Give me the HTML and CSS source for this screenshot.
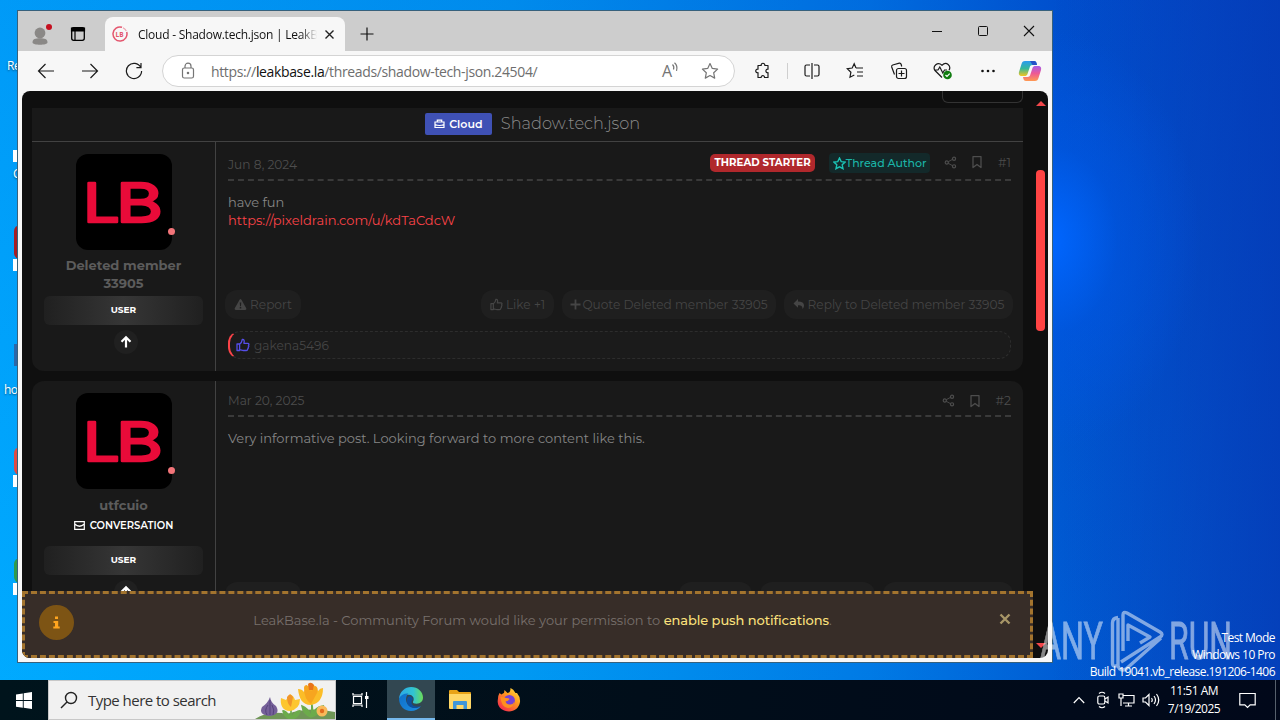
FILE: index.html
```html
<!DOCTYPE html>
<html lang="en">
<head>
    <meta charset="UTF-8">
    <meta name="viewport" content="width=device-width, initial-scale=1.0">
    <title>Desktop</title>
    <link rel="stylesheet" href="styles.css">
</head>
<body>
    <!-- shared icons -->
    <svg class="defs" width="0" height="0">
        <symbol id="thumb" viewBox="0 0 14 14"><path d="M1 6h2.6v6.5H1zM3.600 6.300C5.500 5 6 3.500 6.300 1.400c1.700-.4 2.400 1.200 1.600 3.900h3.900c1.300 0 1.500 1.500.6 2 .7.600.5 1.500-.2 1.800.4.700.1 1.500-.6 1.700.2 1-.4 1.700-1.400 1.700H7.500c-1.500 0-2.400-.8-3.900-.8" fill="none" stroke="currentColor" stroke-width="1.300" stroke-linejoin="round"/></symbol>
        <symbol id="share" viewBox="0 0 14 14"><path d="M4.500 6.200l4.800-2.700M4.500 7.800l4.800 2.700" stroke="currentColor" fill="none"/><g fill="none" stroke="currentColor" stroke-width="1.300"><circle cx="3" cy="7" r="1.700"/><circle cx="10.800" cy="2.900" r="1.700"/><circle cx="10.800" cy="11.100" r="1.700"/></g></symbol>
        <symbol id="bookmark" viewBox="0 0 14 14"><path d="M3 1.600h8v11L7 9.400l-4 3.200z" fill="none" stroke="currentColor" stroke-width="1.300" stroke-linejoin="round"/></symbol>
        <symbol id="warn" viewBox="0 0 14 14"><path d="M7 1.200q.6 0 1 .7l5.200 9.200q.6 1.400-.9 1.700H1.700Q.2 12.500.8 11.100L6 1.900q.4-.7 1-.7zM6.200 4.800l.3 4h1l.3-4zM6.200 9.800v1.400h1.600V9.800z" fill="currentColor" fill-rule="evenodd"/></symbol>
        <symbol id="up" viewBox="0 0 14 14"><path d="M7 12.500V2.500M2.500 6.800L7 2.300l4.500 4.500" fill="none" stroke="currentColor" stroke-width="2.200"/></symbol>
        <symbol id="lb" viewBox="0 0 96 96"><rect width="96" height="96" rx="12" fill="#000"/><g class="lb-text"><text x="7" y="67.500" textLength="37" lengthAdjust="spacingAndGlyphs">L</text><text x="40" y="67.500" textLength="47" lengthAdjust="spacingAndGlyphs">B</text></g></symbol>
    </svg>

    <div class="desktop">
        <div class="shortcuts">
            <span class="shortcut s1">Re</span>
            <span class="shortcut s2">C</span>
            <span class="shortcut s3">ho</span>
            <i class="app p1"></i><i class="app p2"></i><i class="app p3"></i><i class="app p4"></i>
            <i class="arrow a1"></i><i class="arrow a2"></i><i class="arrow a3"></i><i class="arrow a4"></i>
        </div>

        <div class="window">
            <div class="tabstrip">
                <div class="tabstrip-left">
                    <svg width="24" height="24" viewBox="0 0 24 24"><circle cx="11" cy="11" r="5.400" fill="#8a8886"/><path d="M3.500 20.500c0-3.500 3-4.200 7.500-4.200s7.500.7 7.500 4.200c0 3-15 3-15 0z" fill="#8a8886"/><circle cx="20" cy="5" r="3" fill="#c50f1f"/></svg>
                    <svg width="16" height="16" viewBox="0 0 16 16"><rect x="1.700" y="1.700" width="12.600" height="12.600" rx="2" fill="none" stroke="#000" stroke-width="1.300"/><path d="M1.500 2h13v3h-13zM5 5v9" stroke="#000" stroke-width="1.200"/></svg>
                </div>
                <div class="tab">
                    <svg width="16" height="16" viewBox="0 0 16 16"><path d="M10 1.300A7 7 0 1 0 14.700 6" fill="none" stroke="#e4566e" stroke-width="1.500"/><path d="M11 1.800A7 7 0 0 1 14.300 5" fill="none" stroke="#f0a0ae" stroke-width="1.200"/><text x="3.600" y="10.800" class="favicon-text">LB</text></svg>
                    <span class="tab-title">Cloud - Shadow.tech.json | LeakBa</span>
                    <svg width="11" height="11" viewBox="0 0 11 11"><path d="M1.500 1.500l8 8M9.500 1.500l-8 8" stroke="#222" stroke-width="1.400"/></svg>
                </div>
                <svg class="new-tab" width="14" height="14" viewBox="0 0 14 14"><path d="M7 .500v13M.500 7h13" stroke="#111" stroke-width="1.200"/></svg>
                <div class="window-buttons">
                    <svg width="12" height="12" viewBox="0 0 12 12"><path d="M1 6.500h10" stroke="#111"/></svg>
                    <svg width="12" height="12" viewBox="0 0 12 12"><rect x="1.500" y="1.500" width="9" height="9" rx="1" fill="none" stroke="#111"/></svg>
                    <svg width="12" height="12" viewBox="0 0 12 12"><path d="M1 1l10 10M11 1L1 11" stroke="#111" stroke-width="1.100"/></svg>
                </div>
            </div>

            <div class="toolbar">
                <div class="nav">
                    <svg width="18" height="18" viewBox="0 0 18 18"><path d="M17 9H1.500M8.500 2L1.500 9l7 7"/></svg>
                    <svg width="18" height="18" viewBox="0 0 18 18"><path d="M1 9h15.500M9.500 2l7 7-7 7"/></svg>
                    <svg width="18" height="18" viewBox="0 0 18 18"><path d="M15.800 5.500A7.600 7.600 0 1 0 16.600 9M16 1v4.600h-4.600"/></svg>
                </div>
                <div class="address">
                    <svg width="16" height="18" viewBox="0 0 16 18" class="grey"><rect x="2.500" y="6" width="11" height="10" rx="1.800"/><path d="M5 6V4.200a3 3 0 0 1 6 0V6"/><circle cx="8" cy="11" r=".700"/></svg>
                    <span class="url">https://<b>leakbase.la</b>/threads/shadow-tech-json.24504/</span>
                    <span class="read-aloud"><span class="read-letter">A</span><svg width="7" height="12" viewBox="0 0 7 12" class="grey"><path d="M.500 2.500q2 2 1 5M2.500.800q3.500 3 2 8"/></svg></span>
                    <svg width="18" height="18" viewBox="0 0 18 18" class="grey"><path d="M9 1.500l2.300 4.900 5.300.7-3.900 3.700 1 5.300L9 13.500l-4.700 2.600 1-5.300L1.400 7.100l5.300-.7z" stroke-linejoin="round"/></svg>
                </div>
                <div class="tools">
                    <svg width="18" height="18" viewBox="0 0 18 18"><path d="M4 3.500h3.200c-.5-3 4-3 3.600 0H14v3.700c-2.800-.4-2.800 3.900 0 3.500v4.800h-3.500c.3-2.400-3.600-2.400-3.300 0H4v-4.800c-3 .5-3-4 0-3.500z" stroke-linejoin="round"/></svg>
                    <span class="divider"></span>
                    <svg width="18" height="18" viewBox="0 0 18 18"><path d="M7 3H3.500Q2 3 2 4.500v8Q2 14 3.500 14H7M9 1v16M11 3h3.500Q16 3 16 4.500v8q0 1.500-1.500 1.500H11"/></svg>
                    <svg width="18" height="18" viewBox="0 0 18 18"><path d="M10 6L8.200 1.800 6.200 6l-4.900.7 3.600 3.500-.9 5L8.300 13M10 6h7M11 10h6M11 14h6"/></svg>
                    <svg width="18" height="18" viewBox="0 0 18 18"><rect x="6.500" y="6.500" width="10" height="10" rx="2"/><path d="M11.500 8.500v6M8.500 11.500h6M4.500 12.500L1.700 5Q1.300 3.500 2.700 3l6.600-1.800q1.500-.2 1.900 1.300l.5 2"/></svg>
                    <svg width="20" height="18" viewBox="0 0 20 18"><path d="M9 15.500L2 8.500C-.8 4.500 4.500-1 9 3.200 13.500-1 18.500 4 16 8.200M1 8h4l1.800-3 3 6L11.500 8H14"/><circle cx="14.500" cy="13" r="4.300" fill="#107c10" stroke="none"/><path d="M12.500 13l1.500 1.500 2.700-2.800" stroke="#fff"/></svg>
                    <svg width="18" height="18" viewBox="0 0 18 18"><g fill="#111" stroke="none"><circle cx="3.500" cy="9" r="1.300"/><circle cx="9" cy="9" r="1.300"/><circle cx="14.500" cy="9" r="1.300"/></g></svg>
                    <svg class="copilot" width="24" height="22" viewBox="0 0 24 22">
                        <defs>
                            <linearGradient id="cp1" x1="0" y1="0" x2="0" y2="1"><stop offset="0" stop-color="#2a9bf0"/><stop offset=".5" stop-color="#35b89b"/><stop offset="1" stop-color="#f4c51f"/></linearGradient>
                            <linearGradient id="cp2" x1="0" y1="0" x2="0" y2="1"><stop offset="0" stop-color="#a65ce8"/><stop offset=".5" stop-color="#ee5a93"/><stop offset="1" stop-color="#ff9a52"/></linearGradient>
                        </defs>
                        <path d="M7 1h9c2 0 2.500 1.500 3 4h-4.500c-2 0-2.500 1-3 3L9.500 14c-.5 1.500-1.500 2-3 2H4c-3 0-3.500-2-3-4L3.500 4C4 2 5 1 7 1z" fill="url(#cp1)" stroke="none"/>
                        <path d="M12 1h4c2 0 2.500 1.500 3 4h-4.500z" fill="#2450c8" stroke="none"/>
                        <path d="M17 21H8c-2 0-2.500-1.500-3-4h4.500c2 0 2.500-1 3-3l2-6c.5-1.500 1.500-2 3-2H20c3 0 3.500 2 3 4l-2.500 8c-.5 2-1.500 3-3.500 3z" fill="url(#cp2)" stroke="none"/>
                    </svg>
                </div>
            </div>

            <div class="viewport">
                <div class="page">
                    <div class="top-button"></div>
                    <div class="thread-title">
                        <span class="prefix"><svg width="11" height="10" viewBox="0 0 11 10"><path d="M1 3h9v5.500H1zM3.300 3V1.200h4.400V3M1 5.500q4.500 2 9 0" fill="none" stroke="#fff" stroke-width="1.200"/></svg>Cloud</span>
                        <span class="title-text">Shadow.tech.json</span>
                    </div>

                    <div class="post post-first">
                        <div class="user">
                            <div class="avatar"><svg width="96" height="96"><use href="#lb"/></svg><i class="status"></i></div>
                            <div class="username">Deleted member<br>33905</div>
                            <div class="user-title">USER</div>
                            <div class="up"><svg width="14" height="14"><use href="#up"/></svg></div>
                        </div>
                        <div class="main">
                            <div class="post-head">
                                <span class="date">Jun 8, 2024</span>
                                <span class="starter">THREAD STARTER</span>
                                <span class="author"><svg width="13" height="13" viewBox="0 0 13 13"><path d="M6.500 1l1.700 3.600 3.900.5-2.900 2.700.8 3.900-3.500-1.900L3 11.700l.8-3.900L.9 5.100l3.900-.5z" fill="none" stroke="#1bc3b5" stroke-width="1.400"/></svg>Thread Author</span>
                                <svg class="share" width="13" height="13"><use href="#share"/></svg>
                                <svg class="bookmark" width="14" height="14"><use href="#bookmark"/></svg>
                                <span class="number">#1</span>
                            </div>
                            <div class="post-body">have fun<br><a>https://pixeldrain.com/u/kdTaCdcW</a></div>
                            <div class="actions">
                                <span class="action report"><svg width="13" height="13"><use href="#warn"/></svg>Report</span>
                                <span class="action like"><svg width="13" height="13"><use href="#thumb"/></svg>Like +1</span>
                                <span class="action quote"><svg width="11" height="11" viewBox="0 0 11 11"><path d="M5.500.500v10M.500 5.500h10" stroke="currentColor" stroke-width="1.800"/></svg>Quote Deleted member 33905</span>
                                <span class="action reply"><svg width="12" height="12" viewBox="0 0 12 12"><path d="M5 1v2.500c4 0 6 1.500 6 4 0 1.500-.6 2.500-1.600 3.500.4-2.500-.8-3.800-4.400-3.800v2.600L.500 5.400z" fill="currentColor"/></svg>Reply to Deleted member 33905</span>
                            </div>
                            <div class="reactions"><svg width="14" height="14"><use href="#thumb"/></svg>gakena5496</div>
                        </div>
                    </div>

                    <div class="post post-second">
                        <div class="user">
                            <div class="avatar"><svg width="96" height="96"><use href="#lb"/></svg><i class="status"></i></div>
                            <div class="username">utfcuio</div>
                            <div class="conversation"><svg width="11" height="9" viewBox="0 0 11 9"><path d="M.700.700h9.600v7.600H.700zM.700 3q4.800 4.500 9.600 0" fill="none" stroke="#fff" stroke-width="1.200"/></svg>CONVERSATION</div>
                            <div class="user-title">USER</div>
                            <div class="up"><svg width="14" height="14"><use href="#up"/></svg></div>
                        </div>
                        <div class="main">
                            <div class="post-head">
                                <span class="date">Mar 20, 2025</span>
                                <svg class="share" width="13" height="13"><use href="#share"/></svg>
                                <svg class="bookmark" width="14" height="14"><use href="#bookmark"/></svg>
                                <span class="number">#2</span>
                            </div>
                            <div class="post-body">Very informative post. Looking forward to more content like this.</div>
                            <div class="actions">
                                <span class="action report"><svg width="13" height="13"><use href="#warn"/></svg></span>
                                <span class="action like"><svg width="13" height="13"><use href="#thumb"/></svg></span>
                                <span class="action quote-short"></span>
                                <span class="action reply-short"></span>
                            </div>
                        </div>
                    </div>
                </div>

                <div class="scrollbar">
                    <i class="scroll-up"></i>
                    <i class="thumb"></i>
                    <i class="scroll-down"></i>
                </div>

                <div class="push-notice">
                    <span class="info"><svg width="9" height="13" viewBox="0 0 9 13"><path d="M3 .500h3v2.600H3zM1.500 5h4.700v5.500h1.500v2H1.300v-2H3V7H1.500z" fill="#ffa51f"/></svg></span>
                    <span class="notice-text">LeakBase.la - Community Forum would like your permission to <a>enable push notifications</a>.</span>
                    <svg class="close" width="12" height="12" viewBox="0 0 12 12"><path d="M1.500 1.500l9 9M10.500 1.500l-9 9" stroke="#a79567" stroke-width="2.400"/></svg>
                </div>
            </div>
        </div>

        <svg class="watermark" width="200" height="70" viewBox="0 0 200 70">
            <g class="watermark-text">
                <text x="1" y="53" textLength="63" lengthAdjust="spacingAndGlyphs">ANY</text>
                <text x="130" y="53" textLength="63" lengthAdjust="spacingAndGlyphs">RUN</text>
            </g>
            <g fill="none" stroke="#fff" stroke-width="3.400" stroke-linejoin="round">
                <path d="M79 11.500q-5.500.5-5.500 5.500v40q0 5 5.500 2V12"/>
                <path d="M84 45V9q0-4 4-2l33 19q4 2.500 0 5L82 56M79 60q2 6 8 3l35-31"/>
                <path d="M89 35V19l22 12-10 6"/>
            </g>
        </svg>

        <div class="build-info">Test Mode<br>Windows 10 Pro<br>Build 19041.vb_release.191206-1406</div>

        <div class="taskbar">
            <div class="start"><svg width="16" height="17" viewBox="0 0 16 17"><path d="M0 2.400l6.800-1v6.700H0zM7.700 1.300L16 0v8.100H7.700zM0 9h6.800v6.700L0 14.700zM7.700 9H16v8l-8.300-1.200z" fill="#fff"/></svg></div>
            <div class="search">
                <svg width="18" height="18" viewBox="0 0 18 18"><circle cx="11" cy="7" r="5.500" fill="none" stroke="#222" stroke-width="1.400"/><path d="M7 11l-6 6" stroke="#222" stroke-width="1.500"/></svg>
                <span>Type here to search</span>
                <svg class="flowers" width="80" height="38" viewBox="0 0 80 38">
                    <path d="M0 38q14-9 32-5 22-8 48-2v7z" fill="#6f9656"/>
                    <path d="M56 36q3-6 0-16M56 35q4-9 12-10-4 9-12 11M56 35q-3-8-9-10 1 8 9 11M36 37V26M36 37q6-8 9-7-2 7-9 8M36 37q-6-8-8-7 2 7 8 8" fill="#6cab4b" stroke="#6cab4b" stroke-width="1.600"/>
                    <path d="M56 24c-9 0-12-7-13-16q4 0 6 3 2-6 7-8 5 1 7 7 2-3 5-3 0 15-12 17z" fill="#fbbd28"/>
                    <path d="M49 7q0-3 3-3l4 6 4-5q4 1 2 7l-6 11q-7-5-7-16z" fill="#f7a51f"/><path d="M53 3q3-3 6 1l-1 5h-4z" fill="#e8731a"/>
                    <path d="M35 30c-8 0-10-7-9-13l5 2 4-6q4 2 5 6l5-1q0 10-10 12z" fill="#fdc62f"/><path d="M32 16q3-5 6 0l-2 10q-4-3-4-10z" fill="#f0952a"/>
                    <path d="M15 16q1 6 6 9 5 8-6 10-12-1-8-9 6-4 8-10z" fill="#756099"/><path d="M15 19v15M13 24q-4 5-1 10M17 24q3 5 1 10" stroke="#55437c" fill="none"/>
                    <circle cx="67" cy="30" r="5.500" fill="#f9b95a"/><circle cx="67" cy="30" r="2.200" fill="#e36b1d"/>
                </svg>
            </div>
            <div class="task"><svg width="18" height="16" viewBox="0 0 18 16"><path d="M1 1v2h9V1M1 15v-2h9v2M1.500 4.500h8v7h-8zM14.500 0v16" fill="none" stroke="#fff" stroke-width="1.200"/><path d="M13 4h3.500v3H13z" fill="#fff"/></svg></div>
            <div class="task active">
                <svg width="24" height="24" viewBox="0 0 24 24">
                    <defs>
                        <linearGradient id="eg" x1="0" x2="1"><stop offset="0" stop-color="#2ba8e8"/><stop offset=".6" stop-color="#31c3d2"/><stop offset="1" stop-color="#6bdc58"/></linearGradient>
                        <linearGradient id="eb" x1="0" x2="1" y2="1"><stop offset="0" stop-color="#0f6fc8"/><stop offset="1" stop-color="#1c8ce0"/></linearGradient>
                    </defs>
                    <path d="M0 11.500C.8 4.500 6 0 12.200 0 19 0 24 5 24 10.500c0 4-3 6.200-6.300 6.200-2.700 0-4.200-1-3.700-2 1.700-2.700.5-6.700-4-7C5 7.500 1.500 10 0 11.500z" fill="url(#eg)"/>
                    <path d="M0 11.500C2 7.500 6 6 9.500 6.500 7 8.500 6 13 8.500 17c3 4.500 9.500 4.500 13.500 2-2.500 3.500-6 5-10 5C5 24 0 18.500 0 11.500z" fill="url(#eb)"/>
                    <path d="M9 10c-2 3-1.500 6.500 1 9 3.500 3 8.500 2.500 12 0-5 1.500-9.500 0-9.500-4 0-1 .5-2 1.500-2.800C13.500 9.500 10.500 8.500 9 10z" fill="#0d4f9e"/>
                </svg>
            </div>
            <div class="task"><svg width="22" height="20" viewBox="0 0 22 20"><path d="M0 1q0-1 1-1h7l2 2h11q1 0 1 1v5H0z" fill="#e8a317"/><path d="M0 4h22v14q0 1-1 1H1q-1 0-1-1z" fill="#ffd766"/><path d="M4 19v-7q0-1 1-1h12q1 0 1 1v7h-3.500v-4h-7v4z" fill="#3f96d8"/></svg></div>
            <div class="task"><svg width="24" height="24" viewBox="0 0 24 24">
                <defs><linearGradient id="fx" x1="1" y1="0" x2=".2" y2="1"><stop offset="0" stop-color="#ffe843"/><stop offset=".45" stop-color="#ff9a1f"/><stop offset="1" stop-color="#f5264f"/></linearGradient></defs>
                <path d="M2.500 5l2 1.500Q6 5 7 5l.500-3 3 3q3 0 3-5 3 1 5 5l1.500 0q3.500 4 3 9c-1 6-5.500 9.500-11 9.500S1 20 .7 14Q.5 8 2.500 5z" fill="url(#fx)"/><circle cx="12.300" cy="12.500" r="5.600" fill="#7542d6"/><path d="M3.500 9q4 0 5.500 1 3 0 3.500 1-1 2-4 2.500 1 3.500 5 3 3-.5 4-3-1 6-6.500 6.500Q4 19 3.500 9z" fill="#ff8f1f"/>
            </svg></div>
            <div class="tray">
                <svg class="caret" width="12" height="8" viewBox="0 0 12 8"><path d="M.800 7L6 1.500 11.200 7"/></svg>
                <svg class="camera" width="12" height="18" viewBox="0 0 12 18"><rect x=".800" y="5" width="7" height="8" rx="1.500"/><path d="M8 8l3-2v6l-3-2M2 2.500Q5 0 8 2.500M2 15.500q3 2.500 6 0"/></svg>
                <svg width="17" height="14" viewBox="0 0 17 14"><path d="M5 2.500h11v7.500H5M10.500 10v3M7 13h7M1 1h4v4H1zM3 5v8"/></svg>
                <svg width="18" height="14" viewBox="0 0 18 14"><path d="M1 5v4h2.500L7 12.500v-11L3.500 5zM9.500 5q1.500 2 0 4M12 3q3 4 0 8M14.500 1q4.500 6 0 12"/></svg>
                <span class="clock">11:51 AM<br>7/19/2025</span>
                <svg class="action-center" width="17" height="17" viewBox="0 0 17 17"><path d="M.800 1.500h15.400v11.300h-5L8.500 15.500l-2.700-2.700h-5z"/></svg>
                <i class="show-desktop"></i>
            </div>
        </div>
    </div>
</body>
</html>
```
FILE: styles.css
```css
* {
    margin: 0;
    padding: 0;
    box-sizing: border-box;
}

body {
    width: 1280px;
    height: 720px;
    overflow: hidden;
    font-family: 'Open Sans', 'Noto Sans', sans-serif;
}

svg {
    display: block;
    flex-shrink: 0;
}

.defs {
    position: absolute;
}

.desktop {
    position: relative;
    width: 1280px;
    height: 720px;
    overflow: hidden;
    background:
        radial-gradient(ellipse 150px 210px at 1050px 240px, #0066ff 0%, rgba(0, 88, 232, 0.5) 45%, rgba(0, 80, 215, 0) 100%),
        linear-gradient(90deg, rgba(4, 56, 180, 0) 1052px, rgba(4, 56, 180, 0.75) 1280px),
        linear-gradient(180deg, rgba(0, 70, 200, 0.14) 0%, rgba(0, 190, 255, 0.12) 100%),
        linear-gradient(90deg, #00a8ff 0%, #0096f2 40%, #0072e2 68%, #0050ce 83%, #044cc8 100%);
}

/* desktop shortcuts, mostly hidden by the window */
.shortcut {
    position: absolute;
    color: #fff;
    font-size: 12px;
    letter-spacing: -0.5px;
    line-height: 16px;
    text-shadow: 0 1px 2px rgba(0, 0, 0, 0.5);
}

.s1 { left: 7px; top: 58px; }
.s2 { left: 13px; top: 166px; }
.s3 { left: 4px; top: 382px; }

.arrow, .app {
    position: absolute;
    width: 12px;
    height: 12px;
    left: 13px;
    background: #fff;
}

.a1 { top: 150px; }
.a2 { top: 259px; }
.a3 { top: 475px; }
.a4 { top: 583px; }

.app {
    left: 14px;
    height: 34px;
    border-radius: 10px;
}

.p1 { top: 225px; background: #a51d24; }
.p2 { top: 344px; height: 22px; border-radius: 0; background: #2c67a8; }
.p3 { top: 447px; height: 28px; background: #df4a43; }
.p4 { top: 558px; height: 25px; background: #2f9a4d; }

.window {
    position: absolute;
    left: 17px;
    top: 10px;
    width: 1036px;
    height: 653px;
    border: 1px solid #37617c;
    background: #f7f7f7;
    display: flex;
    flex-direction: column;
}

.tabstrip {
    height: 40px;
    background: #cdcdcd;
    display: flex;
    align-items: flex-end;
}

.tabstrip-left {
    width: 87px;
    height: 40px;
    padding: 5px 0 0 11px;
    display: flex;
    align-items: center;
    gap: 17px;
}

.tab {
    width: 240px;
    height: 34px;
    padding: 0 10px 0 7px;
    background: #f7f7f7;
    border-radius: 8px 8px 0 0;
    display: flex;
    align-items: center;
}

.favicon-text {
    font: bold 6.5px 'Open Sans', sans-serif;
    fill: #e4566e;
}

.tab-title {
    width: 179px;
    margin: 0 7px 0 10px;
    font-size: 12px;
    letter-spacing: -0.24px;
    color: #111;
    white-space: nowrap;
    overflow: hidden;
    mask-image: linear-gradient(90deg, #000 162px, transparent 179px);
}

.new-tab {
    margin: 0 0 10px 15px;
}

.window-buttons {
    margin-left: auto;
    height: 40px;
    padding-right: 17px;
    display: flex;
    align-items: center;
    gap: 34px;
}

.toolbar {
    height: 40px;
    display: flex;
    align-items: center;
}

.toolbar svg {
    fill: none;
    stroke: #1b1b1b;
    stroke-width: 1.2;
}

.toolbar svg.grey {
    stroke: #757575;
}

.nav {
    width: 144px;
    padding-left: 19px;
    display: flex;
    gap: 26px;
}

.address {
    width: 573px;
    height: 32px;
    padding: 0 15px 0 17px;
    background: #fff;
    border: 1px solid #d4d4d4;
    border-radius: 16px;
    display: flex;
    align-items: center;
}

.url {
    margin-left: 15px;
    flex: 1;
    font-size: 14px;
    letter-spacing: -0.36px;
    color: #6e6e6e;
    white-space: nowrap;
}

.url b {
    font-weight: 400;
    color: #111;
}

.read-aloud {
    display: flex;
    margin-right: 22px;
    color: #757575;
}

.read-letter {
    font-size: 16px;
    line-height: 18px;
}

.tools {
    flex: 1;
    padding: 0 10px 0 19px;
    display: flex;
    align-items: center;
    justify-content: space-between;
}

.copilot {
    margin-left: -4px;
}

.divider {
    width: 1px;
    height: 16px;
    margin: 0 -11px 0 -10px;
    background: #cfcfcf;
}

/* forum page */
.viewport {
    position: relative;
    width: 1026px;
    height: 567px;
    margin-left: 4px;
    display: flex;
    overflow: hidden;
    border-radius: 8px;
    background: #0f0f0f;
    font-family: Montserrat, Inter, sans-serif;
}

.page {
    width: 1011px;
    padding: 0 10px;
    display: flex;
    flex-direction: column;
}

.top-button {
    width: 81px;
    height: 12px;
    margin: 0 0 5px auto;
    border: 1px solid #333;
    border-top: none;
    border-radius: 0 0 6px 6px;
    flex-shrink: 0;
}

.thread-title {
    height: 34px;
    flex-shrink: 0;
    padding-left: 10px;
    background: #191919;
    border-bottom: 1px solid #424242;
    display: flex;
    align-items: center;
    justify-content: center;
    gap: 9px;
}

.prefix {
    width: 67px;
    height: 22px;
    margin-top: -1px;
    background: #3f51b5;
    border-radius: 2px;
    color: #fff;
    font-size: 11px;
    font-weight: 600;
    display: flex;
    align-items: center;
    justify-content: center;
    gap: 4px;
}

.title-text {
    margin-bottom: 4px;
    font-size: 16.2px;
    color: #8c8c8c;
    font-weight: 300;
}

.post {
    height: 290px;
    flex-shrink: 0;
    margin-bottom: 10px;
    background: #191919;
    border-radius: 12px;
    display: flex;
}

.post-first {
    height: 229px;
    border-radius: 0 0 12px 12px;
}

.user {
    width: 184px;
    padding: 12px 12px 0;
    border-right: 1px solid #424242;
    display: flex;
    flex-direction: column;
    align-items: center;
}

.avatar {
    position: relative;
}

.lb-text {
    font: 400 54px Inter, sans-serif;
    fill: #e90b39;
    stroke: #e90b39;
    stroke-width: 2.4;
    stroke-linejoin: round;
}

.status {
    position: absolute;
    right: -3px;
    bottom: 15px;
    width: 7px;
    height: 7px;
    border-radius: 50%;
    background: #f27479;
}

.username {
    margin: 6px 0 1px;
    font-size: 13px;
    line-height: 18px;
    font-weight: 700;
    color: #5c5c5c;
    text-align: center;
    white-space: nowrap;
}

.conversation {
    height: 18px;
    margin: 2px 0 9px;
    display: flex;
    align-items: center;
    gap: 5px;
    font-size: 10px;
    font-weight: 600;
    color: #fff;
}

.post-second .username {
    margin: 7px 0 0;
}

.user-title {
    width: 159px;
    height: 29px;
    margin-top: 3px;
    border-radius: 6px;
    background: linear-gradient(90deg, #202020, #363636 50%, #202020);
    color: #fff;
    font-size: 9px;
    font-weight: 700;
    line-height: 28px;
    text-align: center;
}

.up {
    width: 24px;
    height: 24px;
    margin: 5px 0 0 5px;
    border-radius: 50%;
    background: #202020;
    color: #fff;
    display: flex;
    align-items: center;
    justify-content: center;
}

.main {
    flex: 1;
    padding: 8px 12px 0;
}

.post-head {
    height: 31px;
    border-bottom: 2px dashed #3a3a3a;
    display: flex;
    align-items: center;
    color: #4d4d4d;
    font-size: 12.2px;
}

.date {
    margin-right: auto;
}

.starter {
    width: 105px;
    height: 18px;
    margin: 0 14px 3px 0;
    border-radius: 5px;
    background: #b0282c;
    color: #fff;
    font-size: 10.2px;
    font-weight: 700;
    line-height: 18px;
    text-align: center;
    white-space: nowrap;
}

.author {
    width: 101px;
    height: 20px;
    margin: 0 14px 3px 0;
    border-radius: 4px;
    background: #13292a;
    color: #1bb5a8;
    font-size: 11px;
    font-weight: 500;
    display: flex;
    align-items: center;
    justify-content: center;
    white-space: nowrap;
}

.share {
    margin-bottom: 5px;
}

.bookmark {
    margin: 0 14px 5px 13px;
}

.number {
    margin-bottom: 5px;
}

.post-body {
    height: 109px;
    padding-top: 12px;
    color: #868686;
    font-size: 13px;
    line-height: 18px;
}

.post-body a {
    color: #fb4348;
}

.post-second .main {
    padding-top: 5px;
}

.post-second .post-head svg,
.post-second .number {
    margin-bottom: 0;
}

.post-second .date {
    margin-bottom: 1px;
}

.post-second .post-body {
    height: 165px;
}

.actions {
    display: flex;
    gap: 8px;
    margin: 0 -2px 0 -3px;
}

.action {
    height: 29px;
    padding-bottom: 1px;
    border-radius: 12px;
    background: #1f1f1f;
    color: #454545;
    font-size: 12.15px;
    display: flex;
    align-items: center;
    justify-content: center;
    gap: 3px;
    white-space: nowrap;
}

.report { width: 76px; margin-right: auto; }
.like { width: 73px; }
.quote { width: 214px; gap: 1px; }
.reply { width: 229px; }
.quote-short { width: 115px; }
.reply-short { width: 130px; }

.reactions {
    height: 28px;
    margin-top: 12px;
    padding-left: 6px;
    border: 1px dashed #2d2d2d;
    border-left: 2px solid #fb4348;
    border-radius: 12px;
    background: #1b1b1b;
    color: #454545;
    font-size: 12.15px;
    display: flex;
    align-items: center;
    gap: 4px;
}

.reactions svg {
    color: #554ee8;
}

.scrollbar {
    width: 15px;
    display: flex;
    flex-direction: column;
    align-items: center;
}

.scroll-up, .scroll-down {
    border: 5px solid transparent;
}

.scroll-up {
    margin: 10px 0 64px;
    border-top: none;
    border-bottom-color: #f2474b;
}

.thumb {
    width: 9px;
    height: 161px;
    border-radius: 4px;
    background: #ff4444;
}

.scroll-down {
    margin: auto 0 10px;
    border-top-color: #f2474b;
    border-bottom: none;
}

.push-notice {
    position: absolute;
    left: 0;
    bottom: 0;
    width: 1011px;
    height: 67px;
    padding: 0 19px 9px 14px;
    border: 3px dashed #a3742e;
    background: #372d28;
    display: flex;
    align-items: center;
}

.info {
    width: 35px;
    height: 35px;
    margin-top: 4px;
    border-radius: 50%;
    background: #7d5414;
    display: flex;
    align-items: center;
    justify-content: center;
}

.notice-text {
    flex: 1;
    padding-left: 12px;
    text-align: center;
    color: #77706c;
    font-size: 13px;
    white-space: nowrap;
}

.notice-text a {
    color: #fbe17c;
    font-weight: 500;
    letter-spacing: -0.08px;
}

.close {
    margin-bottom: 2px;
}

.build-info {
    position: absolute;
    right: 5px;
    top: 629px;
    color: #fff;
    font-size: 12px;
    line-height: 17px;
    letter-spacing: -0.55px;
    text-align: right;
}

.watermark {
    position: absolute;
    left: 1039px;
    top: 606px;
    opacity: 0.5;
}

.watermark-text {
    font: 400 52px Roboto, sans-serif;
    fill: #fff;
    stroke: #fff;
    stroke-width: 0.8;
}

.taskbar {
    position: absolute;
    left: 0;
    bottom: 0;
    width: 1280px;
    height: 40px;
    background: linear-gradient(90deg, #00141c, #010e1a 50%, #01081a);
    display: flex;
}

.start, .task {
    width: 48px;
    display: flex;
    align-items: center;
    justify-content: center;
}

.task {
    width: 49px;
}

.task.active {
    width: 48px;
    margin-left: 2px;
    background: #324751;
    border-bottom: 2px solid #76b9ed;
}

.search {
    width: 288px;
    padding-left: 11px;
    background: #f1f1f1;
    border: 1px solid #c8c8c8;
    display: flex;
    align-items: center;
    color: #333;
    font-size: 15px;
    letter-spacing: -0.53px;
}

.search span {
    margin-left: 10px;
    white-space: nowrap;
}

.flowers {
    margin-left: auto;
}

.tray {
    flex: 1;
    display: flex;
    align-items: center;
    justify-content: flex-end;
    gap: 7px;
}

.tray svg {
    fill: none;
    stroke: #fff;
    stroke-width: 1.2;
}

.tray .caret {
    margin-right: 5px;
}

.tray .camera {
    margin-right: 2px;
}

.clock {
    width: 54px;
    color: #fff;
    font-size: 12px;
    line-height: 18px;
    letter-spacing: -0.5px;
    text-align: center;
    white-space: nowrap;
}

.action-center {
    margin: 0 11px;
}

.show-desktop {
    width: 5px;
    height: 40px;
    margin-left: 1px;
    border-left: 1px solid #56606c;
}
```
